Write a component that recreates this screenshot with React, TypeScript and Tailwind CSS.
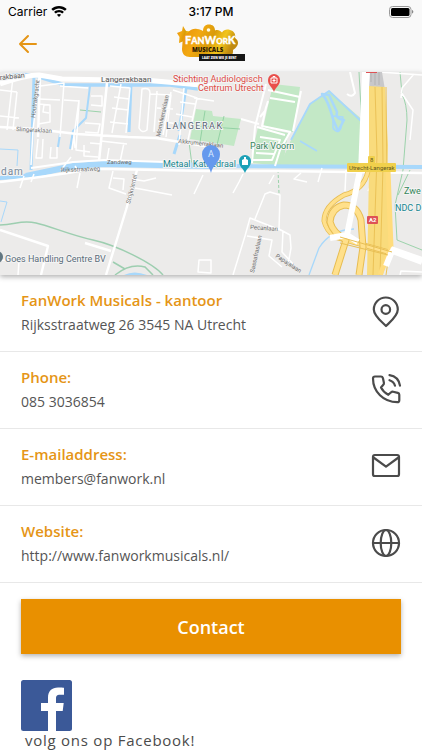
import type { ReactNode } from "react";

function StatusBar() {
  return (
    <div className="grid h-5 grid-cols-3 items-center pt-1 pr-2 pl-2 text-xs leading-4 text-black">
      <div className="flex items-center gap-1">
        <span>Carrier</span>
        <svg className="h-3 w-4" viewBox="0 0 16 12" fill="#000" aria-hidden="true">
          <path d="M8 0C5 0 2.300 1.100.3 3l1.700 1.800C3.600 3.300 5.700 2.400 8 2.400s4.400.9 6 2.400L15.700 3C13.700 1.100 11 0 8 0Z" />
          <path d="M8 4c-1.900 0-3.600.7-4.900 1.900l1.700 1.700C5.700 6.800 6.800 6.300 8 6.300s2.300.5 3.200 1.300l1.700-1.700C11.600 4.700 9.900 4 8 4Z" />
          <path d="M8 8c-.8 0-1.500.3-2.100.8L8 11l2.100-2.200C9.500 8.300 8.800 8 8 8Z" />
        </svg>
      </div>
      <span className="text-center font-medium">3:17 PM</span>
      <svg className="h-3 w-[25px] justify-self-end" viewBox="0 0 25 12" aria-hidden="true">
        <rect x=".5" y=".5" width="21.500" height="11" rx="3" fill="none" stroke="#999" />
        <rect x="2" y="2" width="18.500" height="8" rx="1.500" fill="#000" />
        <path d="M23 4c1 .4 1.300 1 1.300 1.800S24 7.200 23 7.600Z" fill="#888" />
      </svg>
    </div>
  );
}

function Logo() {
  return (
    <svg className="h-10 w-[70px]" viewBox="0 0 70 40" role="img" aria-label="FanWork Musicals">
      <defs>
        <linearGradient id="gold" x1="0" x2="1" y1="0" y2=".3">
          <stop offset="0" stopColor="#e58e08" />
          <stop offset=".35" stopColor="#f3a912" />
          <stop offset=".6" stopColor="#d99b0a" />
          <stop offset=".8" stopColor="#f2c51c" />
          <stop offset="1" stopColor="#c08a10" />
        </linearGradient>
      </defs>
      <g fill="url(#gold)">
        <path d="M7 2l3 5 6 .5-3 4.500 2 6-7-1-5 2 .5-6L1 9l5-2Z" />
        <path d="M7 12c6-3 7-8 14-7 3 .3 4 1 6 2 0-4 2-6.500 6-6.500 3.500 0 6 2 6 6 3-1 5 0 7 2 2-3 5-3.500 8-2.500 4 1 6 4 5 8 3 2 4 5 2 8-1 2-3 3-4 4v2c0 3-3 5-7 5H14c-5 0-8-3-8-8Z" />
      </g>
      <circle cx="32.500" cy="6" r="1.800" fill="#fffbe5" />
      <g fontFamily='"Open Sans", sans-serif' fontWeight="800">
        <text x="9" y="20" fontFamily="Lato, sans-serif" fontWeight="900" fontSize="11" fill="#fff" stroke="#fff" strokeWidth=".3">
          F<tspan fontSize="9">AN</tspan>W<tspan fontSize="8">OR</tspan>K
        </text>
        <text x="16" y="28" fontSize="6" fill="#2d1b04">MUSICALS</text>
        <rect x="23" y="30" width="46" height="7" fill="#171717" />
        <text x="26" y="35" fontSize="3" fill="#fff">LAAT ZIEN WIE JE BENT</text>
      </g>
    </svg>
  );
}

const thinRoads =
  "M0 90 17 92M13 77 7 130M0 116 19 118M17 92 13 130M39 77 33 130 31 165M40 86 64 83 60 137M39 99 60 100M38 104 50 105 50 122 38 124M44 105 43 112 49 113M60 86 88 88M79 100 72 150M64 100 79 101 76 150 90 152M75 148 74 136M38 139 36 158 42 158 43 139M51 147 50 158 57 158 57 147M84 145 84 156 98 157M90 143 102 144M91 96 102 96 102 106 91 105M85 123 100 124 98 133 85 132M110 86 130 88 126 133M114 97 129 99M112 108 128 110M110 122 128 124M121 84 112 133M124 143 120 162M109 148 107 160 119 162M101 141 127 144M142 89Q150 87 150 93L147 130Q142 134 139 128ZM157 91 154 132M150 94 171 95 166 137M157 108 173 109M158 121 178 124M171 92 163 135M173 90 197 98 188 140M184 88 179 145M180 102 195 104M176 114 192 117M194 98 214 101M61 170 71 157M75 166 79 172M24 176 20 188M34 174 31 182M80 173 77 188M113 171 109 188 126 194M113 178 124 179 123 190M132 179 144 181 156 178M135 188 172 195M203 175 194 194M243 174 239 182 233 193M274 175 269 184M301 173 294 179 307 182M322 168 318 182M346 170 345 191M378 170 368 191M255 219 265 194 270 192 280 195 279 229 290 235 291 248 288 265M245 236 250 218 283 231 282 252 294 265M247 236 272 240 269 256 282 267M245 236 233 275M0 260 19 261 18 275M199 260 211 260 211 273 198 272ZM400 275 401 271 422 272M379 72 422 75M401 92 413 110 410 140M401 98 402 88 414 74";

function StreetLabel({ x, y, turn = 0, children }: { x: number; y: number; turn?: number; children: ReactNode }) {
  return (
    <text x={x} y={y} fontSize="6" fill="#707070" transform={`rotate(${turn} ${x} ${y})`}>
      {children}
    </text>
  );
}

function StreetMap() {
  return (
    <svg
      className="block aspect-[422/203] w-full bg-[#ecebea]"
      viewBox="0 72 422 203"
      preserveAspectRatio="xMidYMid slice"
      role="img"
      aria-label="Map of Langerak, Utrecht"
      fontFamily="Roboto, sans-serif"
    >
      <g fill="#c3e8c6">
        <path d="M196 109 212 111 213 116 241 119 234 146 190 139Z" />
        <path d="M273 84 300 87 293 132 263 128Z" />
        <path d="M258 127 288 133 283 166 250 163Z" />
        <path d="M329 91 364 121 362 165 280 165 291 140 310 104Z" />
      </g>
      <g fill="none" stroke="#86cb9b" strokeWidth=".8">
        <path d="M80 110 101 112M198 126 240 129M205 111 200 142M224 116 217 145M189 142 192 165" />
        <path d="M0 225C17 224 22 220 36 223S70 235 93 240 153 263 163 275M115 275Q130 263 145 267L153 275M113 262 125 269" stroke="#9dceb0" strokeWidth="1.500" />
        <path d="M278 170 279 193" strokeDasharray="3 2" />
        <path d="M359 72 364 165M400 72 402 94Q407 104 407 120L403 170 395 205 397 240 422 250M410 170 398 195" />
      </g>
      <g fill="none" stroke="#a8d8fb" strokeLinejoin="round">
        <path d="M0 79Q20 72 36 76L65 85H115L170 85 198 89" strokeWidth="3.500" />
        <path d="M34 76 31 170M131 84 129 132M186 88 179 131M180 135 174 154" strokeWidth="3" />
        <path d="M90 86 86 118 73 131 70 149M60 134 58 147" strokeWidth="2" />
        <path d="M26 176Q55 170 73 166L104 164 211 166" strokeWidth="6" />
        <path d="M0 178Q15 178 30 175M205 166 422 167" strokeWidth="4" />
        <path d="M0 149 18 150 17 166M0 201 7 202 1 222" strokeWidth="1" />
        <path d="M291 140 310 104 329 91 362 122V148M300 141 317 151" strokeWidth="1.800" />
        <path d="M322 94Q328 100 333 119L338 131 344 120Q335 119 337 112L329 95Z" strokeWidth="2.500" />
        <path d="M333 116 343 117 341 128Q338 135 333 128Z" strokeWidth="1.500" />
        <path d="M354 229Q330 230 319 248L309 275" strokeWidth="1.300" />
      </g>
      <path d="M124 275Q134 270 147 275Z" fill="#a8d8fb" />
      <g fill="none" stroke="#fff" strokeLinejoin="round">
        <path d={thinRoads} strokeWidth="1.500" />
        <path d="M0 84Q25 75 39 75L62 79 112 80 133 79 212 86" strokeWidth="5" />
        <path d="M107 83 99 161M40 76 38 137M0 127 35 129 77 134 128 137 156 138 180 142 205 146" strokeWidth="2.500" />
        <path d="M0 182Q66 174 90 169L110 169 205 171 278 171 422 173" strokeWidth="2.500" />
        <path d="M31 168 73 162 104 160 165 162" strokeWidth="2" />
        <path d="M137 170 126 210 106 275M0 230 48 246 41 275M85 243 111 251" strokeWidth="2.400" />
        <path d="M266 84 255 127 252 163M268 90 300 97M270 98 295 102M266 107 262 126 291 132M301 91 293 131M241 119 259 124M290 132 280 150 275 166M260 137 280 140 272 160 252 160M256 153 274 154M268 101 265 111 260 117M257 127 285 135" strokeWidth="2" />
        <path d="M350 72 355 93Q352 98 347 94" strokeWidth="2" />
      </g>
      <path d="M362 72 372 72 369 166 365 173 358 173Z" fill="#fff" />
      <path d="M370 72H382L385 90H369Z" fill="#c8c8ca" />
      <path d="M369 86 385 87 388 145 387 180 390 245 383 275H367L369 172Z" fill="#f9db7c" />
      <g fill="none" strokeLinejoin="round">
        <path d="M368 171Q364 190 344 195 324 206 324 221 326 230 335 237L392 253" stroke="#e7bd52" strokeWidth="5" />
        <path d="M368 171Q364 190 344 195 324 206 324 221 326 230 335 237L392 253" stroke="#ffe08b" strokeWidth="3.500" />
        <path d="M359 275 363 247 361 220Q357 205 344 205 331 208 330 222 333 233 346 240L335 275" stroke="#e7bd52" strokeWidth="7" />
        <path d="M359 275 363 247 361 220Q357 205 344 205 331 208 330 222 333 233 346 240L335 275" stroke="#ffe08b" strokeWidth="5" />
        <path d="M375 87 377 155 373 275M382 87 383 165 380 275M386 87 387 180 391 240 386 275" stroke="#ebc257" strokeWidth="1" />
        <path d="M388 170 391 248 380 275" stroke="#ffdc7d" strokeWidth="5" />
        <path d="M360 170 347 235 330 238M347 235 358 242M390 250 422 262M391 249 422 260M392 251 386 266" stroke="#fff" strokeWidth="6" />
        <path d="M340 237 392 252M340 243 388 255" stroke="#e8bf54" strokeWidth="1" />
        <path d="M371 72V82M375 72V85M379 72V85" stroke="#aaa" strokeWidth=".7" />
      </g>

      <StreetLabel x={35} y={118} turn={-83}>Houtrakgracht</StreetLabel>
      <StreetLabel x={16} y={131} turn={3}>Slingeraklaan</StreetLabel>
      <StreetLabel x={160} y={137} turn={-78}>Monnikeraklaan</StreetLabel>
      <StreetLabel x={178} y={143} turn={6}>Akkrumerraklaan</StreetLabel>
      <StreetLabel x={107} y={164}>Zandweg</StreetLabel>
      <StreetLabel x={61} y={172} turn={-2}>Rijksstraatweg</StreetLabel>
      <StreetLabel x={130} y={204} turn={-76}>Strijkviertel</StreetLabel>
      <StreetLabel x={250} y={229} turn={4}>Pecanlaan</StreetLabel>
      <StreetLabel x={254} y={273} turn={-78}>Sassafraslaan</StreetLabel>
      <StreetLabel x={275} y={257} turn={33}>Papajalaan</StreetLabel>

      <g stroke="#f4f4f4" strokeWidth="2" paintOrder="stroke" strokeLinejoin="round">
        <text x="0" y="80" fontSize="7" fill="#555" transform="rotate(-6 0 80)">rakbaan</text>
        <text x="101" y="82" fontSize="8" fill="#555">Langerakbaan</text>
        <text x="1" y="175" fontSize="10" letterSpacing="1" fill="#789">dam</text>
        <text x="166" y="129" fontSize="9" letterSpacing="1.500" fill="#566575">LANGERAK</text>
        <g fill="#dd4b46" fontSize="9">
          <text x="173" y="82">Stichting Audiologisch</text>
          <text x="198" y="91">Centrum Utrecht</text>
        </g>
        <text x="250" y="149" fontSize="9" fill="#36875b">Park Voorn</text>
        <text x="163" y="167" fontSize="9" fill="#158790">Metaal Kathedraal</text>
        <text x="5" y="262" fontSize="9" fill="#5b6c79">Goes Handling Centre BV</text>
        <text x="404" y="194" fontSize="9" fill="#36875b">Zwe</text>
        <text x="395" y="211" fontSize="9" fill="#158790">NDC D</text>
      </g>
      <circle cx="-3" cy="257" r="6" fill="#617681" />
      <path d="M274 92C272 86 268 86 268 80a6 6 0 0 1 12 0c0 6-4 6-6 12Z" fill="#e94f4b" />
      <path d="M271 78h6v5h-6ZM273 78v-1.500h2V78M274 79v3M272.500 80.500h3" fill="none" stroke="#fff" />
      <path d="M245 173C243 168 239 167 239 161a6 6 0 0 1 12 0c0 6-4 7-6 12Z" fill="#1ba0b6" />
      <path d="M242 165v-5l2-1v-2h2v2l2 1v5Z" fill="#fff" />
      <path d="M211 173C209 164 202 163 202 154a9 9 0 0 1 18 0c0 9-7 10-9 19Z" fill="#6599ed" />
      <text x="208" y="157" fontSize="9" fill="#dceaff">A</text>
      <rect x="347" y="163" width="49" height="9" rx="1" fill="#f0d04c" />
      <text x="349" y="170" fontSize="6" fill="#63571e">Utrecht-Langerak</text>
      <rect x="368" y="156" width="7" height="8" rx="1" fill="#f0d04c" />
      <text x="370" y="162" fontSize="6" fill="#63571e">8</text>
      <rect x="367" y="216" width="11" height="8" rx="1" fill="#de5255" />
      <text x="369" y="222" fontSize="6" fontWeight="700" fill="#fff">A2</text>
      <path d="M366 71h11v2h-11Z" fill="#de5255" />
    </svg>
  );
}

function RowIcon({ children }: { children: ReactNode }) {
  return (
    <svg
      className="size-8 shrink-0"
      viewBox="0 0 32 32"
      fill="none"
      stroke="#4b4b4b"
      strokeWidth="2.200"
      strokeLinecap="round"
      strokeLinejoin="round"
      aria-hidden="true"
    >
      {children}
    </svg>
  );
}

const rows = [
  {
    title: "FanWork Musicals - kantoor",
    value: "Rijksstraatweg 26 3545 NA Utrecht",
    href: "#map",
    icon: (
      <>
        <path d="M16 30C12 26 3.800 20 3.800 13.500a12 12 0 0 1 24 0C27.800 20 20 26 16 30Z" />
        <circle cx="15.800" cy="13.500" r="4.300" />
      </>
    ),
  },
  {
    title: "Phone:",
    value: "085 3036854",
    href: "tel:0853036854",
    icon: (
      <>
        <path d="M5 3.500h6c1 0 1.600.6 1.900 1.600l1 4.600c.2.900 0 1.500-.6 2.100L11 14.500c1.700 3.400 4 5.600 7.300 7.300l2.800-2.500c.6-.5 1.300-.7 2.100-.5l4.600 1.100c1 .3 1.500.9 1.500 1.900v5.400c0 1.200-.9 2-2 2C13.500 29.200 3 18.700 3 5.500c0-1.200.8-2 2-2Z" />
        <path d="M19.500 7.200c2.800.8 4.700 2.700 5.500 5.500M19.500 2.200c5.600.9 9.600 4.900 10.500 10.500" />
      </>
    ),
  },
  {
    title: "E-mailaddress:",
    value: "members@fanwork.nl",
    href: "mailto:members@fanwork.nl",
    icon: (
      <>
        <rect x="3" y="5" width="26" height="21" rx="1.800" />
        <path d="M3.500 7.500 16 16.700 28.500 7.500" />
      </>
    ),
  },
  {
    title: "Website:",
    value: "http://www.fanworkmusicals.nl/",
    href: "http://www.fanworkmusicals.nl/",
    icon: (
      <>
        <circle cx="16" cy="16" r="13" />
        <ellipse cx="16" cy="16" rx="5.300" ry="13" />
        <path d="M3 16h26" />
      </>
    ),
  },
];

export default function App() {
  return (
    <div className="min-h-screen bg-white font-['Open_Sans','Noto_Sans',sans-serif]">
      <header className="bg-[#f9f9f9] font-[Inter,sans-serif]">
        <StatusBar />
        <div className="grid h-13 grid-cols-3 items-center px-4 pb-1">
          <button type="button" aria-label="Back" className="flex size-6 items-center justify-center">
            <svg className="size-5" viewBox="0 0 20 20" fill="none" stroke="#e59516" strokeWidth="2" strokeLinecap="round" strokeLinejoin="round">
              <path d="M18 10H2M10 2 2 10l8 8" />
            </svg>
          </button>
          <div className="flex justify-center">
            <Logo />
          </div>
        </div>
      </header>
      <main>
        <div id="map" className="shadow-[0_2px_5px_rgba(0,0,0,0.3)]">
          <StreetMap />
        </div>
        {rows.map((row) => (
          <a key={row.title} href={row.href} className="flex min-h-[77px] items-center justify-between border-b border-[#e8e8e8] pr-5 pb-0.5 pl-[21px]">
            <span className="flex flex-col">
              <span className="pb-px text-[15px] leading-6 font-semibold text-[#e59516]">{row.title}</span>
              <span className="text-sm leading-6 text-[#555]">{row.value}</span>
            </span>
            <RowIcon>{row.icon}</RowIcon>
          </a>
        ))}
        <div className="px-[21px] pt-4">
          <button type="button" className="h-[55px] w-full bg-[#e99000] text-lg font-semibold text-white shadow-[0_2px_5px_rgba(0,0,0,0.3)]">
            Contact
          </button>
          <a href="https://www.facebook.com/" className="mt-[26px] block text-[#4b4b4b]">
            <svg className="block size-[52px]" viewBox="1 0 52 52" role="img" aria-label="Facebook">
              <rect x="1" y="0" width="51" height="51" rx="2.500" fill="#3b5998" />
              <path d="M28 51V31h-7v-8h7v-5.500C28 11 32 7.500 38 7.500c3 0 5 .2 6 .3v7h-4c-3.200 0-4 1.500-4 3.800V23h7.700l-1 8H36v20Z" fill="#fff" />
            </svg>
            <span className="block pl-1 text-[15px] leading-4 tracking-wider">volg ons op Facebook!</span>
          </a>
        </div>
      </main>
    </div>
  );
}
